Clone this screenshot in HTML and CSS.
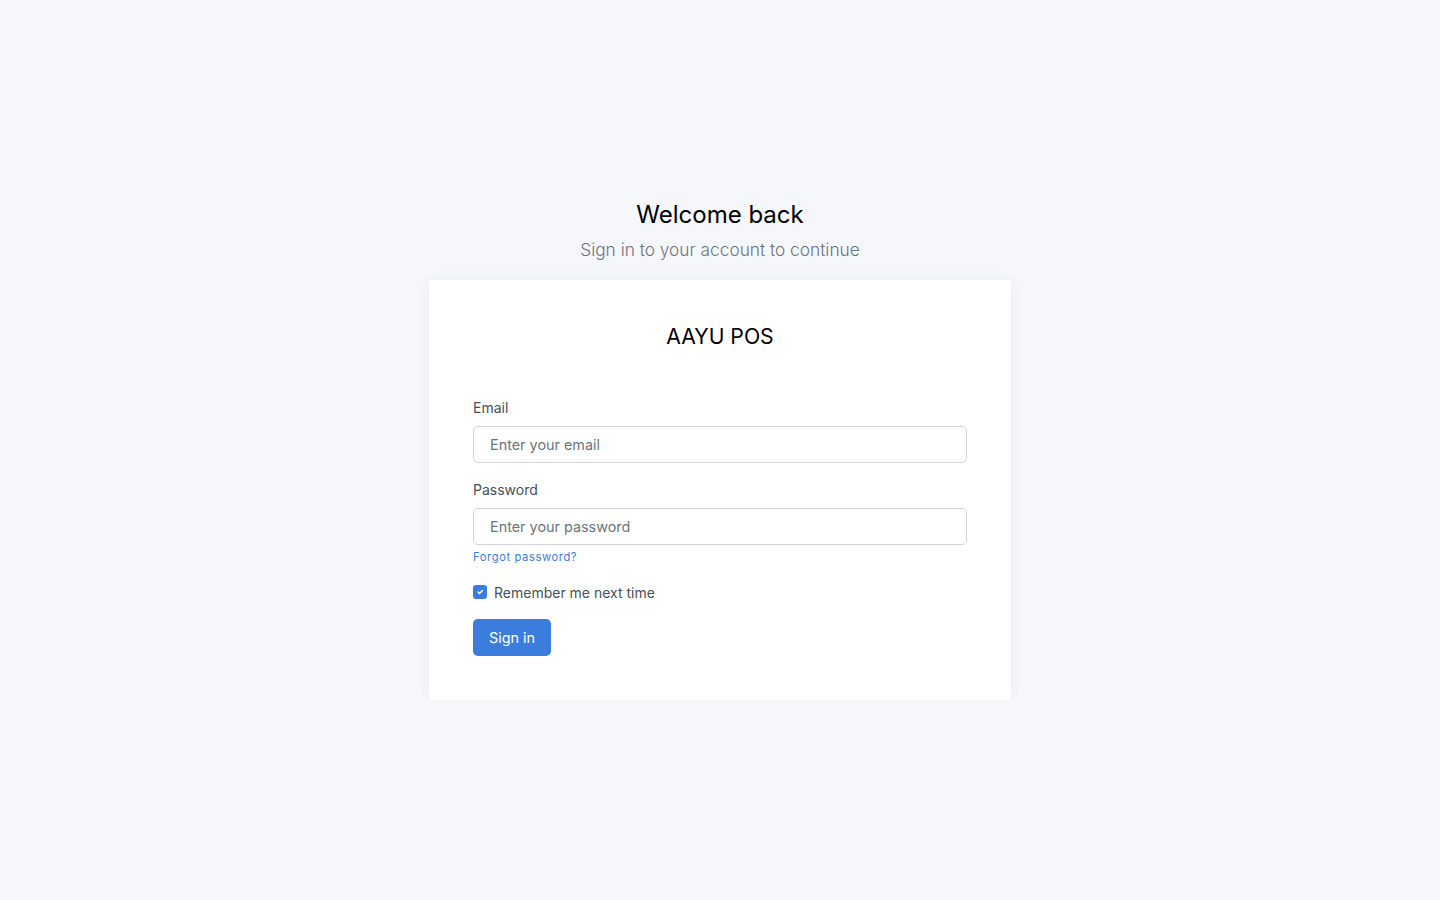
FILE: index.html
```html
<!DOCTYPE html>
<html lang="en">
<head>
<meta charset="utf-8">
<title>Sign in - AAYU POS</title>
<link rel="stylesheet" href="styles.css">
</head>
<body>
<main class="page">
  <div class="auth">
    <div class="intro">
      <h1 class="title">Welcome back</h1>
      <p class="lead">Sign in to your account to continue</p>
    </div>
    <div class="card">
      <div class="card-inner">
        <div class="brand">AAYU POS</div>
        <form class="form">
          <div class="group">
            <label class="label" for="email">Email</label>
            <input class="input" id="email" type="email" placeholder="Enter your email">
          </div>
          <div class="group group-pw">
            <label class="label" for="password">Password</label>
            <input class="input" id="password" type="password" placeholder="Enter your password">
            <a class="forgot" href="#">Forgot password?</a>
          </div>
          <label class="check">
            <span class="box"><svg width="10" height="10" viewBox="0 0 20 20"><path d="M6 10l3 3 6-6" fill="none" stroke="#fff" stroke-width="3" stroke-linecap="round" stroke-linejoin="round"/></svg></span>
            <span>Remember me next time</span>
          </label>
          <div class="actions">
            <button type="button" class="btn">Sign in</button>
          </div>
        </form>
      </div>
    </div>
  </div>
</main>
</body>
</html>
```

FILE: styles.css
```css
* { box-sizing: border-box; }
html, body { margin: 0; padding: 0; }
body {
  background: #f5f7fb;
  font-family: Inter, "Noto Sans", "Liberation Sans", sans-serif;
  font-size: 14px;
  line-height: 1.5;
  color: #495057;
}
.page {
  display: flex;
  justify-content: center;
  padding-top: 200px;
}
.auth {
  width: 582px;
}
.intro {
  text-align: center;
}
.title {
  margin: 0 0 8px;
  font-size: 24px;
  line-height: 29px;
  font-weight: 400;
  color: #000;
}
.lead {
  margin: 0 0 17px;
  font-size: 17.3px;
  line-height: 26px;
  font-weight: 300;
  color: #6c757d;
}
.card {
  background: #fff;
  border-radius: 4px;
  box-shadow: 0 0 14px 0 rgba(33, 37, 41, 0.05);
}
.card-inner {
  padding: 44px;
}
.brand {
  text-align: center;
  font-size: 21.2px;
  line-height: 24px;
  color: #000;
  margin-bottom: 49px;
}
.group {
  display: flex;
  flex-direction: column;
  margin-bottom: 16px;
}
.group-pw { margin-bottom: 15.5px; }
.group-pw .label { margin-bottom: 8.5px; }
.label {
  line-height: 21px;
  margin-bottom: 7.5px;
}
.input {
  height: 37px;
  padding: 0 16px;
  border: 1px solid #ced4da;
  border-radius: 4.8px;
  font-family: inherit;
  font-size: 14.4px;
  color: #495057;
  background: #fff;
  outline: none;
}
.input::placeholder { color: #6c757d; }
.forgot {
  margin-top: 4px;
  font-size: 11.2px;
  line-height: 17px;
  letter-spacing: 0.6px;
  color: #3b7ddd;
  text-decoration: none;
  align-self: flex-start;
}
.check {
  display: flex;
  align-items: center;
  gap: 7px;
  line-height: 21px;
  margin-bottom: 16px;
}
.box {
  width: 14px;
  height: 14px;
  border-radius: 3px;
  background: #3b7ddd;
  display: flex;
  align-items: center;
  justify-content: center;
}
.btn {
  height: 37px;
  padding: 0 16px;
  border: 0;
  border-radius: 4.8px;
  background: #3b7ddd;
  color: #fff;
  font-family: inherit;
  font-size: 14.4px;
  cursor: pointer;
}
```
